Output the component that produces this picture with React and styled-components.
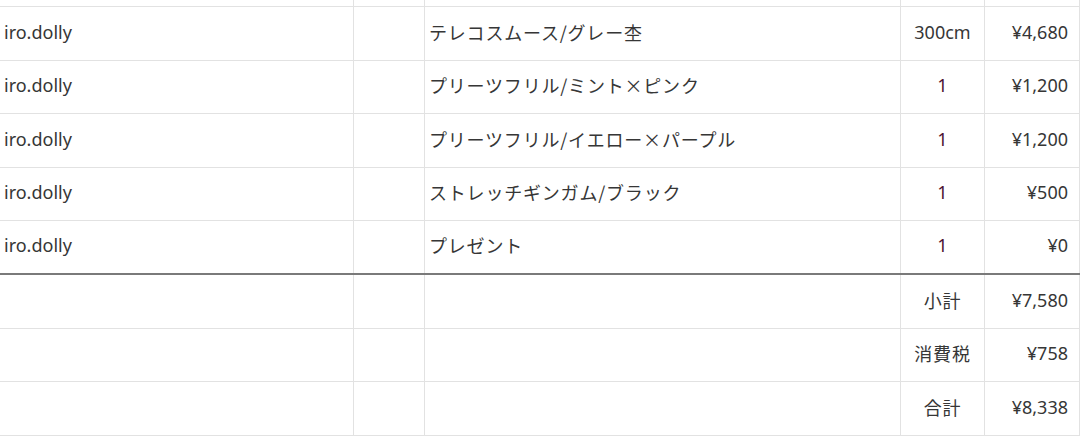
import React from 'react';
import styled, { createGlobalStyle } from 'styled-components';

const GlobalStyle = createGlobalStyle`
  html, body {
    margin: 0;
    padding: 0;
    background: #ffffff;
  }
  body {
    font-family: "Noto Sans", "Noto Sans CJK JP", sans-serif;
    color: #333333;
    overflow: hidden;
  }
`

const Sheet = styled.div`
  width: 1080px;
  height: 436px;
  overflow: hidden;
  background: #ffffff;
`

const Row = styled.div`
  display: grid;
  grid-template-columns: 354px 71px 476px 84px 95px;
  height: ${props => props.h}px;
  box-sizing: border-box;
  border-bottom: ${props => props.thick ? '2px solid #7a7a7a' : '1px solid #e2e2e2'};
`

const Cell = styled.div`
  box-sizing: border-box;
  border-right: 1px solid #e2e2e2;
  display: flex;
  align-items: center;
  justify-content: ${props => props.align === 'right' ? 'flex-end' : props.align === 'center' ? 'center' : 'flex-start'};
  padding: ${props => props.align === 'right' ? '0 11px 4px 0' : props.align === 'center' ? '0 0 4px 0' : '0 0 4px 4px'};
  font-family: ${props => props.jp ? '"Noto Sans CJK JP", "Noto Sans", sans-serif' : '"Noto Sans", "Noto Sans CJK JP", sans-serif'};
  font-size: 18px;
  letter-spacing: ${props => props.jp ? '0.8px' : '0'};
  color: ${props => props.qty ? '#4e1433' : '#363636'};
  white-space: nowrap;
`

const items = [
  { shop: 'iro.dolly', name: 'テレコスムース/グレー杢', qty: '300cm', price: '¥4,680', h: 54 },
  { shop: 'iro.dolly', name: 'プリーツフリル/ミント×ピンク', qty: '1', price: '¥1,200', h: 53 },
  { shop: 'iro.dolly', name: 'プリーツフリル/イエロー×パープル', qty: '1', price: '¥1,200', h: 54 },
  { shop: 'iro.dolly', name: 'ストレッチギンガム/ブラック', qty: '1', price: '¥500', h: 53 },
  { shop: 'iro.dolly', name: 'プレゼント', qty: '1', price: '¥0', h: 54 },
]

const totals = [
  { label: '小計', value: '¥7,580', h: 54 },
  { label: '消費税', value: '¥758', h: 53 },
  { label: '合計', value: '¥8,338', h: 54 },
]

function EmptyRow({ h }) {
  return (
    <Row h={h}>
      <Cell />
      <Cell />
      <Cell />
      <Cell />
      <Cell />
    </Row>
  )
}

export default function App() {
  return (
    <Sheet>
      <GlobalStyle />
      <EmptyRow h={7} />
      {items.map((item, i) => (
        <Row key={i} h={item.h} thick={i === items.length - 1}>
          <Cell>{item.shop}</Cell>
          <Cell />
          <Cell jp>{item.name}</Cell>
          <Cell align="center" qty={item.qty === '1'}>{item.qty}</Cell>
          <Cell align="right">{item.price}</Cell>
        </Row>
      ))}
      {totals.map((t, i) => (
        <Row key={i} h={t.h}>
          <Cell />
          <Cell />
          <Cell />
          <Cell align="center" jp>{t.label}</Cell>
          <Cell align="right">{t.value}</Cell>
        </Row>
      ))}
      <EmptyRow h={20} />
    </Sheet>
  )
}
